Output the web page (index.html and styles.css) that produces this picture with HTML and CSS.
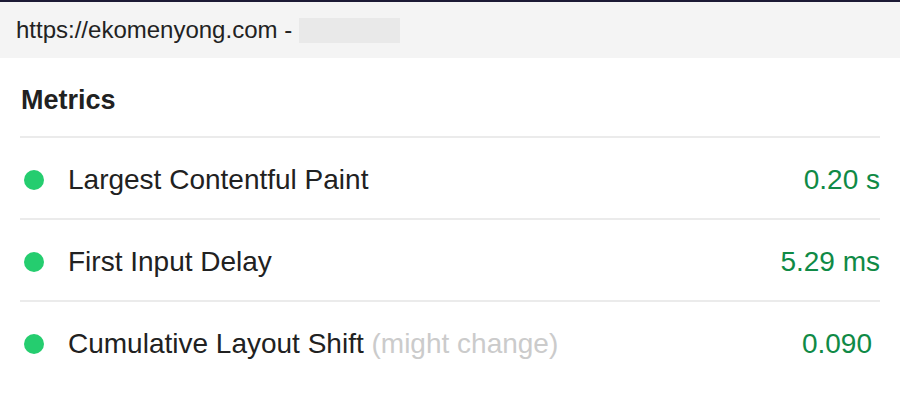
FILE: index.html
```html
<!DOCTYPE html>
<html lang="en">
<head>
<meta charset="utf-8">
<title>Metrics</title>
<link rel="stylesheet" href="styles.css">
</head>
<body>
<div class="topbar"></div>
<header class="header"><span class="url">https://ekomenyong.com - </span><span class="placeholder"></span></header>
<main class="content">
  <h2 class="title">Metrics</h2>
  <div class="row">
    <span class="dot"></span>
    <span class="name">Largest Contentful Paint</span>
    <span class="value">0.20&nbsp;s</span>
  </div>
  <div class="row">
    <span class="dot"></span>
    <span class="name">First Input Delay</span>
    <span class="value">5.29&nbsp;ms</span>
  </div>
  <div class="row row-last">
    <span class="dot"></span>
    <span class="name">Cumulative Layout Shift <span class="note">(might change)</span></span>
    <span class="value value-cls">0.090</span>
  </div>
</main>
</body>
</html>
```
FILE: styles.css
```css
html, body {
  margin: 0;
  padding: 0;
  background: #ffffff;
  font-family: "Liberation Sans", Arial, Helvetica, sans-serif;
  color: #212121;
}

.topbar {
  height: 2px;
  background: #1c1a35;
}

.header {
  height: 56px;
  background: #f4f4f4;
  display: flex;
  align-items: center;
  padding-left: 16px;
  font-size: 24px;
  color: #222222;
  white-space: pre;
}

.placeholder {
  display: inline-block;
  width: 101px;
  height: 25px;
  background: #e9e9e9;
}

.content {
  padding: 27px 20px 0;
}

.title {
  margin: 0;
  padding-left: 1px;
  font-size: 27px;
  line-height: 30px;
  font-weight: bold;
  color: #212121;
  padding-bottom: 21px;
  border-bottom: 2px solid #ebebeb;
}

.row {
  display: flex;
  align-items: center;
  height: 77px;
  padding-top: 3px;
  border-bottom: 2px solid #ebebeb;
  font-size: 28px;
}

.row-last {
  border-bottom: none;
}

.dot {
  width: 20px;
  height: 20px;
  border-radius: 50%;
  background: #25cd6f;
  margin-left: 4px;
  margin-right: 24px;
  flex: none;
}

.name {
  flex: 1;
  color: #212121;
}

.note {
  color: #cbcbcb;
}

.value {
  color: #0f8a46;
}

.value-cls {
  padding-right: 8px;
}
```
